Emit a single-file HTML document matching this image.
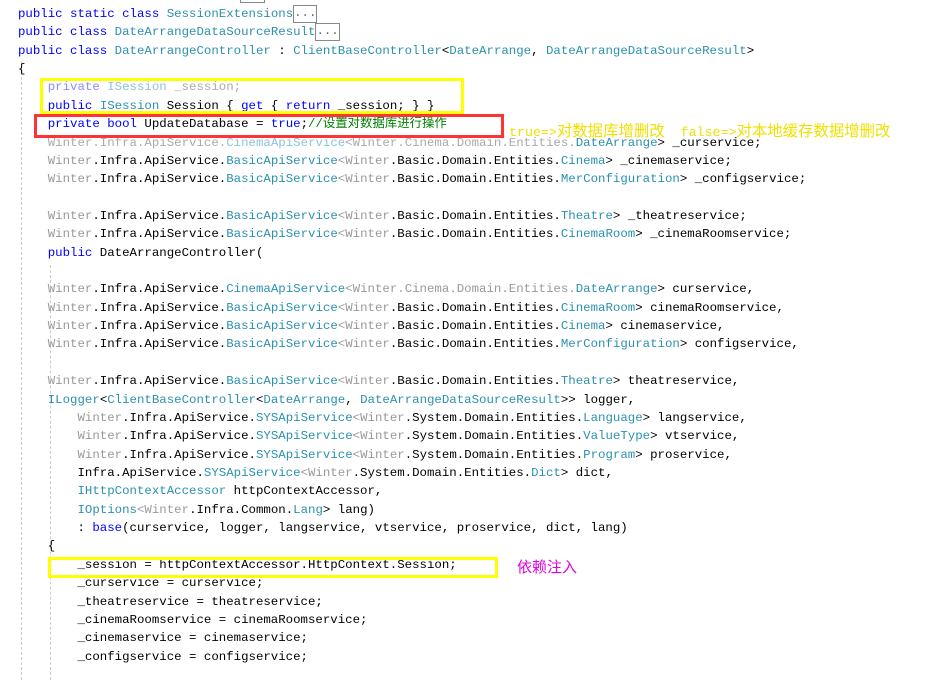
<!DOCTYPE html>
<html><head><meta charset="utf-8"><style>
html,body{margin:0;padding:0;background:#fff;width:929px;height:680px;overflow:hidden;position:relative}
.c{position:absolute;left:18px;top:5px;margin:0;font-family:"Liberation Mono","Noto Sans CJK SC",monospace;font-size:12.4px;line-height:18.36px;color:#000;white-space:pre}
.k{color:#0000ff}.t{color:#2b91af}.g{color:#999}.cm{color:#008000}
.fk{color:#8c8cff}.ft{color:#8fc3d6}.fg{color:#aaa}
.box{position:absolute;box-sizing:border-box}
.dots{display:inline-block;border:1px solid #888;line-height:14px;height:16px;vertical-align:top;margin-top:0px;color:#666}
.guide{position:absolute;width:0;border-left:1px dashed #ccc}
.ann{position:absolute;font-family:"Liberation Mono","Noto Sans CJK SC",monospace;white-space:pre}
.ann b{font-weight:normal;font-size:15.4px}
</style></head><body>
<div class="guide" style="left:21px;top:62px;height:618px"></div>
<div class="guide" style="left:50px;top:265px;height:415px"></div>
<div class="box" style="left:240px;top:0;width:25px;height:3px;border:1px solid #888;border-top:none"></div>
<pre class="c"><span class="k">public static class</span> <span class="t">SessionExtensions</span><span class="dots">...</span>
<span class="k">public class</span> <span class="t">DateArrangeDataSourceResult</span><span class="dots">...</span>
<span class="k">public class</span> <span class="t">DateArrangeController</span> : <span class="t">ClientBaseController</span>&lt;<span class="t">DateArrange</span>, <span class="t">DateArrangeDataSourceResult</span>&gt;
{
    <span class="fk">private</span> <span class="ft">ISession</span> <span class="fg">_session;</span>
    <span class="k">public</span> <span class="t">ISession</span> Session { <span class="k">get</span> { <span class="k">return</span> _session; } }
    <span class="k">private bool</span> UpdateDatabase = <span class="k">true</span>;<span class="cm">//设置对数据库进行操作</span>
    <span class="fg">Winter.</span><span class="fg">Infra.ApiService.</span><span class="ft">CinemaApiService</span><span class="fg">&lt;Winter.Cinema.Domain.Entities.</span><span class="t">DateArrange</span>&gt; _curservice;
    <span class="g">Winter</span>.Infra.ApiService.<span class="t">BasicApiService</span><span class="g">&lt;Winter</span>.Basic.Domain.Entities.<span class="t">Cinema</span>&gt; _cinemaservice;
    <span class="g">Winter</span>.Infra.ApiService.<span class="t">BasicApiService</span><span class="g">&lt;Winter</span>.Basic.Domain.Entities.<span class="t">MerConfiguration</span>&gt; _configservice;

    <span class="g">Winter</span>.Infra.ApiService.<span class="t">BasicApiService</span><span class="g">&lt;Winter</span>.Basic.Domain.Entities.<span class="t">Theatre</span>&gt; _theatreservice;
    <span class="g">Winter</span>.Infra.ApiService.<span class="t">BasicApiService</span><span class="g">&lt;Winter</span>.Basic.Domain.Entities.<span class="t">CinemaRoom</span>&gt; _cinemaRoomservice;
    <span class="k">public</span> DateArrangeController(

    <span class="g">Winter</span>.Infra.ApiService.<span class="t">CinemaApiService</span><span class="g">&lt;Winter.Cinema.Domain.Entities.</span><span class="t">DateArrange</span>&gt; curservice,
    <span class="g">Winter</span>.Infra.ApiService.<span class="t">BasicApiService</span><span class="g">&lt;Winter</span>.Basic.Domain.Entities.<span class="t">CinemaRoom</span>&gt; cinemaRoomservice,
    <span class="g">Winter</span>.Infra.ApiService.<span class="t">BasicApiService</span><span class="g">&lt;Winter</span>.Basic.Domain.Entities.<span class="t">Cinema</span>&gt; cinemaservice,
    <span class="g">Winter</span>.Infra.ApiService.<span class="t">BasicApiService</span><span class="g">&lt;Winter</span>.Basic.Domain.Entities.<span class="t">MerConfiguration</span>&gt; configservice,

    <span class="g">Winter</span>.Infra.ApiService.<span class="t">BasicApiService</span><span class="g">&lt;Winter</span>.Basic.Domain.Entities.<span class="t">Theatre</span>&gt; theatreservice,
    <span class="t">ILogger</span>&lt;<span class="t">ClientBaseController</span>&lt;<span class="t">DateArrange</span>, <span class="t">DateArrangeDataSourceResult</span>&gt;&gt; logger,
        <span class="g">Winter</span>.Infra.ApiService.<span class="t">SYSApiService</span><span class="g">&lt;Winter</span>.System.Domain.Entities.<span class="t">Language</span>&gt; langservice,
        <span class="g">Winter</span>.Infra.ApiService.<span class="t">SYSApiService</span><span class="g">&lt;Winter</span>.System.Domain.Entities.<span class="t">ValueType</span>&gt; vtservice,
        <span class="g">Winter</span>.Infra.ApiService.<span class="t">SYSApiService</span><span class="g">&lt;Winter</span>.System.Domain.Entities.<span class="t">Program</span>&gt; proservice,
        Infra.ApiService.<span class="t">SYSApiService</span><span class="g">&lt;Winter</span>.System.Domain.Entities.<span class="t">Dict</span>&gt; dict,
        <span class="t">IHttpContextAccessor</span> httpContextAccessor,
        <span class="t">IOptions</span><span class="g">&lt;Winter</span>.Infra.Common.<span class="t">Lang</span>&gt; lang)
        : <span class="k">base</span>(curservice, logger, langservice, vtservice, proservice, dict, lang)
    {
        _session = httpContextAccessor.HttpContext.Session;
        _curservice = curservice;
        _theatreservice = theatreservice;
        _cinemaRoomservice = cinemaRoomservice;
        _cinemaservice = cinemaservice;
        _configservice = configservice;</pre>
<div class="box" style="left:40px;top:78px;width:424px;height:36px;border:3px solid #ffff00"></div>
<div class="box" style="left:34px;top:114px;width:470px;height:24px;border:3px solid #ff3333"></div>
<div class="box" style="left:48px;top:557px;width:450px;height:21px;border:3px solid #ffff00"></div>
<div class="ann" style="left:509px;top:119px;font-size:13.3px;color:#f0e000">true=&gt;<b>对数据库增删改</b>  false=&gt;<b>对本地缓存数据增删改</b></div>
<div class="ann" style="left:517px;top:556px;font-size:15px;color:#e000e0"><b style="font-size:15px">依赖注入</b></div>
</body></html>
